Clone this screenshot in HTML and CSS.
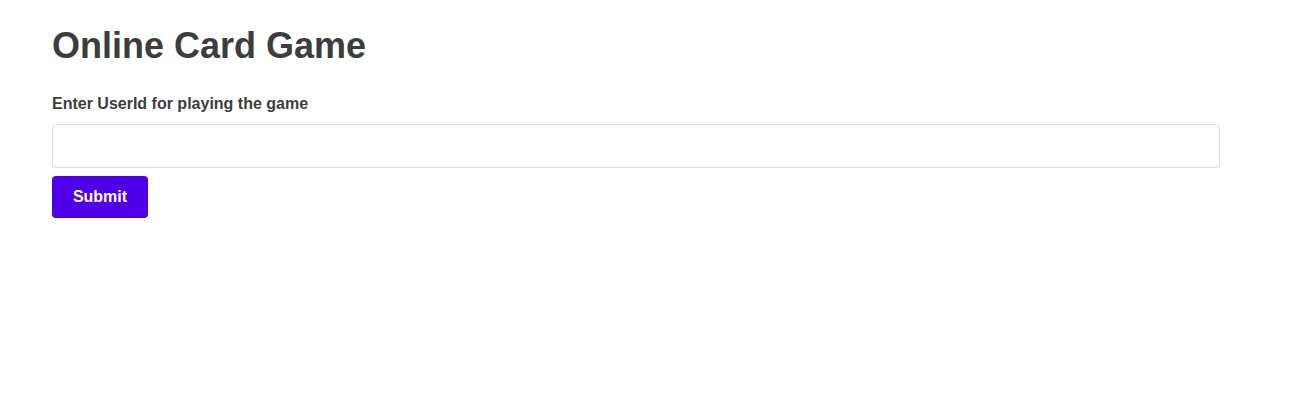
FILE: index.html
```html
<!DOCTYPE html>
<html>
<head>
<meta charset="utf-8">
<link rel="stylesheet" href="styles.css">
</head>
<body>
<div class="container">
  <h1 class="title">Online Card Game</h1>
  <form class="form">
    <label class="label" for="uid">Enter UserId for playing the game</label>
    <input class="input" id="uid" type="text">
    <button class="btn" type="button">Submit</button>
  </form>
</div>
</body>
</html>
```

FILE: styles.css
```css
html, body {
  margin: 0;
  padding: 0;
  background: #fff;
}
body {
  font-family: "Liberation Sans", Arial, sans-serif;
  color: #3d3d3d;
}
.container {
  width: 1168px;
  padding: 24px 0 0 52px;
}
.title {
  margin: 0;
  font-size: 36px;
  line-height: 44px;
  font-weight: bold;
}
.form {
  display: flex;
  flex-direction: column;
  align-items: flex-start;
  margin-top: 27px;
}
.label {
  font-size: 16px;
  font-weight: bold;
  line-height: 18px;
}
.input {
  box-sizing: border-box;
  width: 1168px;
  height: 44px;
  margin-top: 11px;
  border: 1px solid #dcdcdc;
  border-radius: 4px;
  padding: 0 12px;
  font-size: 16px;
  font-family: inherit;
}
.btn {
  margin-top: 8px;
  width: 96px;
  height: 42px;
  border: none;
  border-radius: 4px;
  background: #5000e8;
  color: #fff;
  font-family: inherit;
  font-size: 16px;
  font-weight: bold;
}
```
